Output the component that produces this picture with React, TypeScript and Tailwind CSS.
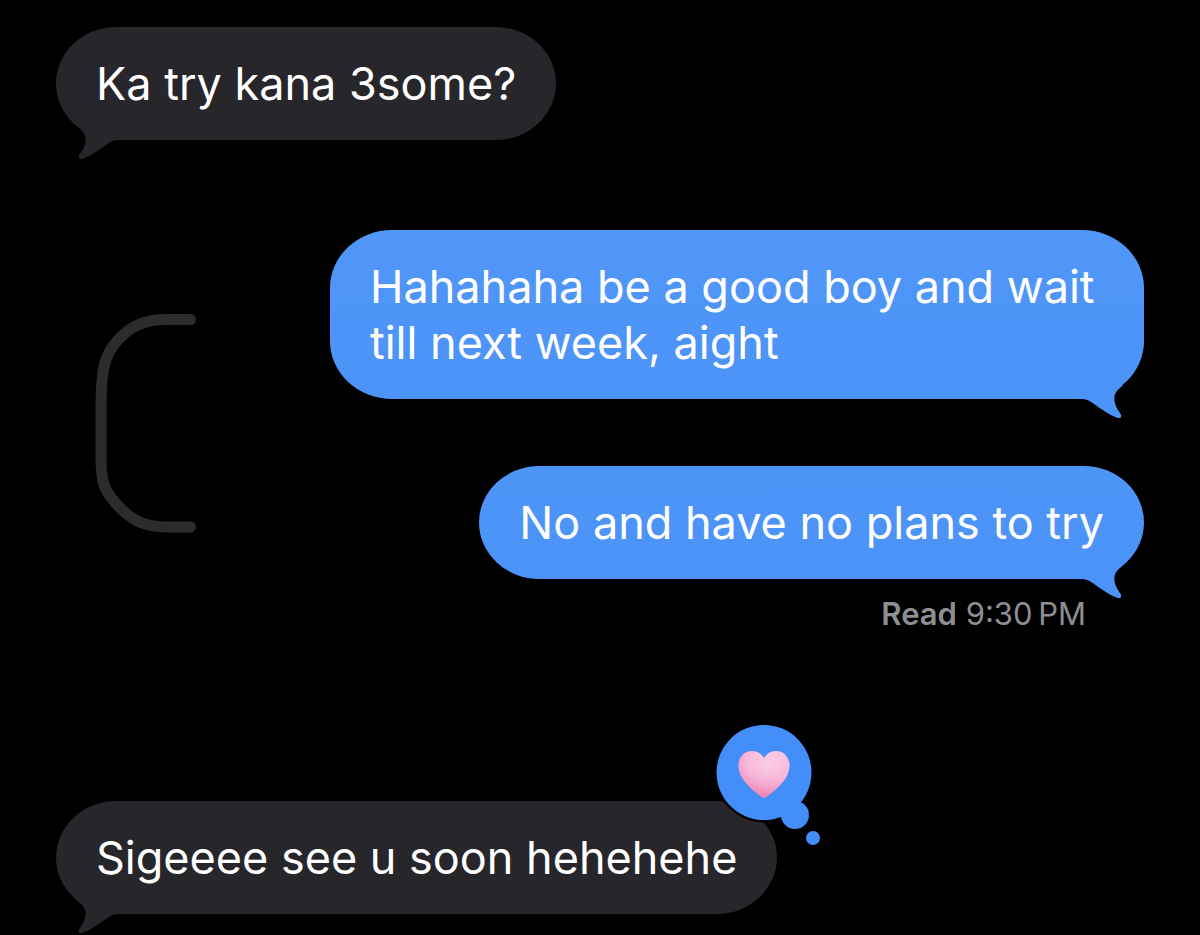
import { ReactNode } from 'react';
import clsx from 'clsx';

interface BubbleProps {
  children: ReactNode;
  sent?: boolean;
  tint?: string;
  reaction?: ReactNode;
}

function Tail({ sent }: { sent: boolean }) {
  return (
    <svg
      aria-hidden="true"
      viewBox="0 0 70 50"
      className={clsx(
        'absolute -bottom-5 h-[50px] w-[70px]',
        sent ? 'right-0 -scale-x-100 text-[#4c93f9]' : 'left-0 text-[#27262a]'
      )}
    >
      <path
        fill="currentColor"
        d="M21 16 C25 20 28.5 22.5 29.4 27 C30.4 33 28 38.5 24 44 C21.8 46.8 22.8 50 26.5 48.9 C33 46.8 44 39.5 51 34.3 C54.5 31.8 57.5 30 63 30 L63 16 Z"
      />
    </svg>
  );
}

function Bubble({ children, sent = false, tint, reaction }: BubbleProps) {
  return (
    <div
      className={clsx(
        'relative w-fit max-w-[814px] rounded-[62px/58px] px-10 pt-[29px] pb-7 text-[45px] leading-[56px] text-white',
        sent ? tint : 'bg-[#27262a]'
      )}
    >
      <Tail sent={sent} />
      <p className="relative">{children}</p>
      {reaction}
    </div>
  );
}

const heartPath =
  'M49 75 C47.5 75 46 73.5 44 72 C33 63.5 23.5 54.5 23.5 42.5 C23.5 34 29.5 28 37 28 C42.5 28 46.5 31 49 35 C51.5 31 55.5 28 61 28 C68.5 28 74.5 34 74.5 42.5 C74.5 54.5 65 63.5 54 72 C52 73.5 50.5 75 49 75 Z';

function HeartReaction() {
  return (
    <svg
      role="img"
      aria-label="Heart reaction"
      viewBox="0 0 108 124"
      className="absolute -top-[78px] -right-[46px] h-[124px] w-[108px]"
    >
      <defs>
        <linearGradient id="heart" x1="0.6" y1="0" x2="0.4" y2="1">
          <stop offset="0" stopColor="#f9cde3" />
          <stop offset="0.5" stopColor="#f8b5da" />
          <stop offset="1" stopColor="#ee84b4" />
        </linearGradient>
        <radialGradient id="shine" cx="0.58" cy="0.34" r="0.62">
          <stop offset="0" stopColor="#fddcee" stopOpacity="0.5" />
          <stop offset="0.6" stopColor="#f8b8dc" stopOpacity="0.3" />
          <stop offset="1" stopColor="#ec80ac" stopOpacity="0.5" />
        </radialGradient>
      </defs>
      <circle cx="49" cy="49.5" r="50" fill="#000" />
      <g fill="#438ef8">
        <circle cx="49" cy="49.5" r="47.5" />
        <circle cx="80" cy="92" r="14" />
        <circle cx="98" cy="115" r="7" />
      </g>
      <path fill="url(#heart)" d={heartPath} />
      <path fill="url(#shine)" d={heartPath} />
    </svg>
  );
}

export default function App() {
  return (
    <main className="flex min-h-screen flex-col overflow-hidden bg-black px-14 pt-[27px] pb-5 font-['Inter',sans-serif]">
      <Bubble>Ka try kana 3some?</Bubble>

      {/* Replies, tied to the thread by the bracket on the left */}
      <section className="mt-[90px] flex justify-between">
        <svg
          aria-hidden="true"
          viewBox="0 0 102 220"
          className="mt-[84px] ml-[39px] h-[220px] w-[102px] shrink-0"
        >
          <path
            fill="none"
            stroke="#2c2c2c"
            strokeWidth="11"
            strokeLinecap="round"
            d="M95.5 5.5 H72 C50 5.5 36 11.5 23 26 C9 41 6 56 6 96 V144 C6 168 9 176 21 189.5 C36 207 50 213 72 213 H95.5"
          />
        </svg>
        <div className="flex flex-col items-end">
          <Bubble sent tint="bg-linear-to-b from-[#5197f8] to-[#4c93f9]">
            Hahahaha be a good boy and wait till next week, aight
          </Bubble>
          <div className="mt-[67px]">
            <Bubble sent tint="bg-linear-to-b from-[#4e95f8] to-[#4c93f9]">
              No and have no plans to try
            </Bubble>
          </div>
          <p className="mt-[17px] mr-[58px] text-[31px] leading-9 text-[#8e8e93]">
            <span className="font-semibold">Read</span> 9:30{'\u202f'}PM
          </p>
        </div>
      </section>

      <div className="mt-[169px]">
        <Bubble reaction={<HeartReaction />}>Sigeeee see u soon hehehehe</Bubble>
      </div>
    </main>
  );
}
